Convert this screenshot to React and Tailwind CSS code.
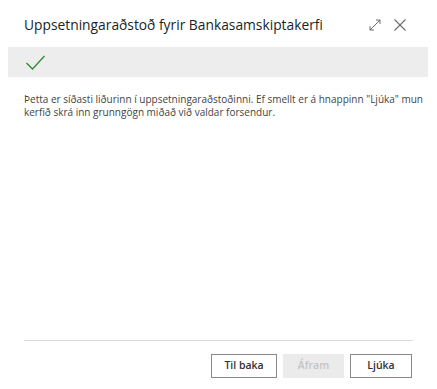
import React from 'react'

function ExpandIcon() {
  return (
    <svg width="12" height="12" viewBox="0 0 12 12" fill="none" stroke="#6b6b6b" strokeWidth="1">
      <path d="M1 11 L11 1" />
      <path d="M7 1 H11 V5" />
      <path d="M1 7 V11 H5" />
    </svg>
  )
}

function CloseIcon() {
  return (
    <svg width="12" height="12" viewBox="0 0 12 12" fill="none" stroke="#6b6b6b" strokeWidth="1.1">
      <path d="M0.5 0.5 L11.5 11.5" />
      <path d="M11.5 0.5 L0.5 11.5" />
    </svg>
  )
}

function Check() {
  return (
    <svg width="19" height="15" viewBox="0 0 19 15" fill="none" stroke="#2e8b2e" strokeWidth="1.3">
      <path d="M0.5 8 L6.5 14 L18.5 1" />
    </svg>
  )
}

export default function App() {
  return (
    <div className="w-[437px] h-[389px] bg-white flex flex-col text-[#323130]" style={{ fontFamily: '"Open Sans", "Noto Sans", sans-serif' }}>
      {/* Header */}
      <div className="flex items-center h-[47px] pl-6 pr-[31px]">
        <h1 className="flex-1 text-[13.8px] leading-none text-[#201f1e] pt-[3px]">Uppsetningaraðstoð fyrir Bankasamskiptakerfi</h1>
        <div className="flex items-center gap-[13px] pt-[3px]">
          <ExpandIcon />
          <CloseIcon />
        </div>
      </div>

      {/* Step indicator */}
      <div className="ml-2 mr-[9px] h-[30px] bg-[#ededed] flex items-center pl-[18px]">
        <Check />
      </div>

      {/* Content */}
      <div className="flex-1 pl-6 pr-3 pt-[16px]">
        <p className="text-[10px] leading-[13px] text-[#444]">
          Þetta er síðasti liðurinn í uppsetningaraðstoðinni. Ef smellt er á hnappinn "Ljúka" mun kerfið skrá inn grunngögn miðað við valdar forsendur.
        </p>
      </div>

      {/* Footer */}
      <div className="mx-6 border-t border-[#dcdcdc]" />
      <div className="flex justify-end gap-[6px] pr-[25px] pt-[13px] pb-[11px]">
        <button className="w-[66px] h-[24px] border border-[#8a8886] bg-white text-[10.5px] font-semibold text-[#323130]">Til baka</button>
        <button className="w-[61px] h-[24px] bg-[#ebebeb] text-[10.5px] font-semibold text-[#c4c4c4]" disabled>Áfram</button>
        <button className="w-[62px] h-[24px] border border-[#8a8886] bg-white text-[10.5px] font-semibold text-[#323130]">Ljúka</button>
      </div>
    </div>
  )
}
